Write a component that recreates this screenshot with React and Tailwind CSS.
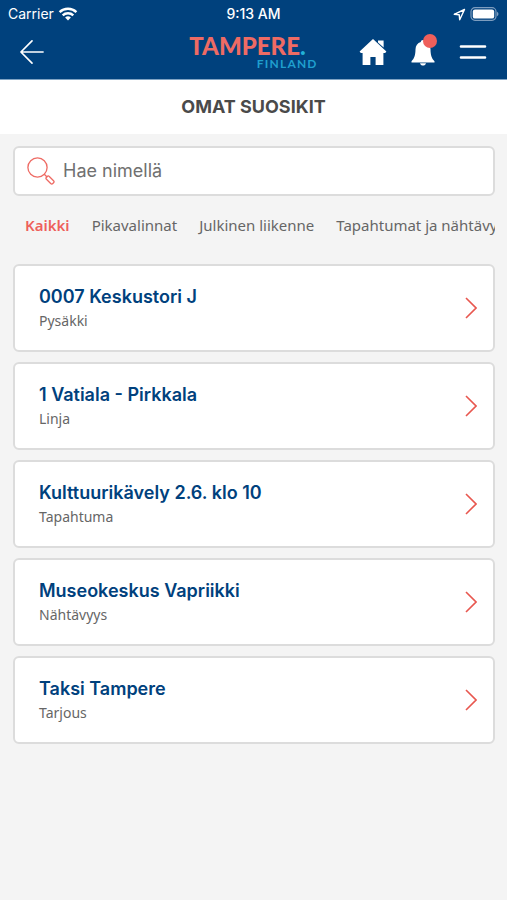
import React from 'react';

const tabs = [
    {value:'all', name:'Kaikki'},
    {value:'quick', name:'Pikavalinnat'},
    {value:'transport', name:'Julkinen liikenne'},
    {value:'events', name:'Tapahtumat ja nähtävyydet'}
]

const favourites = [
    {name:'0007 Keskustori J', type:'Pysäkki'},
    {name:'1 Vatiala - Pirkkala', type:'Linja'},
    {name:'Kulttuurikävely 2.6. klo 10', type:'Tapahtuma'},
    {name:'Museokeskus Vapriikki', type:'Nähtävyys'},
    {name:'Taksi Tampere', type:'Tarjous'}
]

function StatusBar(){
    return(
        <div className="grid grid-cols-3 items-center h-7 px-2 text-sm leading-5">
            <div className="flex items-center gap-1">
                <span>Carrier</span>
                <svg width="20" height="16" viewBox="0 0 20 16" fill="none" stroke="currentColor" strokeWidth="2.4">
                    <path d="M1.6 6.2a12 12 0 0 1 16.8 0" />
                    <path d="M4.7 9.4a7.6 7.6 0 0 1 10.6 0" />
                    <path d="M10 14.6l-2.9-3a4.2 4.2 0 0 1 5.8 0z" fill="currentColor" stroke="none" />
                </svg>
            </div>
            <div className="text-center font-medium">9:13 AM</div>
            <div className="flex items-center justify-end gap-1">
                <svg width="13" height="13" viewBox="0 0 13 13" fill="none" stroke="currentColor" strokeWidth="1.4" strokeLinejoin="round">
                    <path d="M11.5 1.5L1.2 6.3l5 .5.5 5z" />
                </svg>
                <svg width="29" height="14" viewBox="0 0 29 14">
                    <rect x="1" y="0.7" width="25" height="12.6" rx="4" fill="none" stroke="#7d9dbf" strokeWidth="1.2" />
                    <rect x="2.8" y="2.4" width="21.4" height="9.2" rx="2.2" fill="#fff" />
                    <path d="M27 4.8c2 .8 2 3.6 0 4.4z" fill="#7d9dbf" />
                </svg>
            </div>
        </div>
    )
}

function Logo(){
    return(
        <a href="#" aria-label="Tampere Finland" className="flex flex-col items-end font-['Lato',sans-serif]">
            <span className="pr-3 text-2xl leading-6 font-black text-[#ee6b64]">
                TAMPERE<span className="text-[#22b1d8]">.</span>
            </span>
            <span className="text-xs leading-3 font-bold tracking-widest text-[#1f9fce]">FINLAND</span>
        </a>
    )
}

function NavBar(){
    return(
        <nav className="grid grid-cols-[1fr_auto_1fr] items-center h-[51px] px-5 pb-1">
            <button type="button" aria-label="Takaisin" className="justify-self-start">
                <svg width="24" height="26" viewBox="0 0 26 28" fill="none" stroke="currentColor" strokeWidth="1.8" strokeLinecap="round" strokeLinejoin="round">
                    <path d="M25 14H1M13 2L1 14l12 12" />
                </svg>
            </button>
            <Logo />
            <div className="flex items-center justify-end gap-6">
                <button type="button" aria-label="Etusivu">
                    <svg width="28" height="28" viewBox="0 0 28 28" fill="currentColor">
                        <path d="M14 1L.6 13.6l1.2 1.5h1.800V27h7.800v-8h5.200v8h7.800V15.100h1.800l1.200-1.500z" />
                        <path d="M19 2.400h5.600v7.200L19 4.400z" />
                    </svg>
                </button>
                <button type="button" aria-label="Ilmoitukset" className="relative">
                    <svg width="24" height="28" viewBox="0 0 24 28" fill="currentColor">
                        <path d="M12 2c-1.300 0-2.200.8-2.200 2C6.400 5 4.600 7.700 4.500 11.200c-.1 5.500-1 9-4 12v1.300h23v-1.300c-3-3-3.900-6.500-4-12C19.400 7.700 17.600 5 14.200 4c0-1.200-.9-2-2.200-2z" />
                        <path d="M9 25.300h6c-.4 1.600-1.600 2.300-3 2.300s-2.600-.7-3-2.300z" />
                    </svg>
                    <span className="absolute -top-1 -right-0.5 size-3.5 rounded-full bg-[#ee5f5b]"></span>
                </button>
                <button type="button" aria-label="Valikko">
                    <svg width="28" height="28" viewBox="0 0 28 28" fill="none" stroke="currentColor" strokeWidth="2.600" strokeLinecap="round">
                        <path d="M2 8.500h24M2 19.500h24" />
                    </svg>
                </button>
            </div>
        </nav>
    )
}

function SearchField(){
    return(
        <label className="flex items-center gap-2 h-[50px] px-3 rounded-md border-2 border-[#dcdcdc] bg-white">
            <svg className="shrink-0" width="28" height="28" viewBox="0 0 28 28" fill="none" stroke="#ee6b64" strokeWidth="1.300">
                <circle cx="10.500" cy="10.500" r="9.600" />
                <path d="M17.300 17.300l3 3" />
                <rect x="18.500" y="21" width="9" height="4" rx="1.500" transform="rotate(45 23 23)" />
            </svg>
            <input
                type="text"
                aria-label="Hae nimellä"
                placeholder="Hae nimellä"
                className="flex-1 min-w-0 text-lg outline-none placeholder:text-[#707070]"
            />
        </label>
    )
}

function FavouriteCard({item}){
    return(
        <li>
            <a href="#" className="flex items-center justify-between h-[88px] pl-6 pr-4 rounded-md border-2 border-[#dcdcdc] bg-white">
                <div className="pt-0.5">
                    <h2 className="text-lg leading-6 font-semibold text-[#00417d]">{item.name}</h2>
                    <p className="font-['Noto_Sans',sans-serif] text-sm leading-6 text-[#666666]">{item.type}</p>
                </div>
                <svg width="12" height="22" viewBox="0 0 12 22" fill="none" stroke="#e8574f" strokeWidth="1.600">
                    <path d="M1 1l10 10L1 21" />
                </svg>
            </a>
        </li>
    )
}

export default function App(){
    const [activeTab, setActiveTab] = React.useState('all')
    return(
        <div className="min-h-screen bg-[#f4f4f4] font-['Inter',sans-serif]">
            <header className="border-b border-[#7fa3c4] bg-[#00417d] text-white">
                <StatusBar />
                <NavBar />
            </header>
            <div className="flex items-center justify-center h-[54px] bg-white">
                <h1 className="text-lg leading-6 font-bold text-[#4a4a4a]">OMAT SUOSIKIT</h1>
            </div>
            <main className="pl-[13px] pr-3 pt-3">
                <SearchField />
                <div className="flex gap-[22px] h-[68px] pl-3 pb-[10px] items-center overflow-hidden">
                    {tabs.map(tab =>
                        <button
                            key={tab.value}
                            type="button"
                            onClick={() => setActiveTab(tab.value)}
                            className={`shrink-0 whitespace-nowrap font-['Noto_Sans',sans-serif] text-[15px] leading-6 ${activeTab === tab.value ? 'font-semibold text-[#ee5f5b]' : 'text-[#666666]'}`}
                        >
                            {tab.name}
                        </button>
                    )}
                </div>
                <ul className="flex flex-col gap-[10px]">
                    {favourites.map(item => <FavouriteCard key={item.name} item={item} />)}
                </ul>
            </main>
        </div>
    )
}
